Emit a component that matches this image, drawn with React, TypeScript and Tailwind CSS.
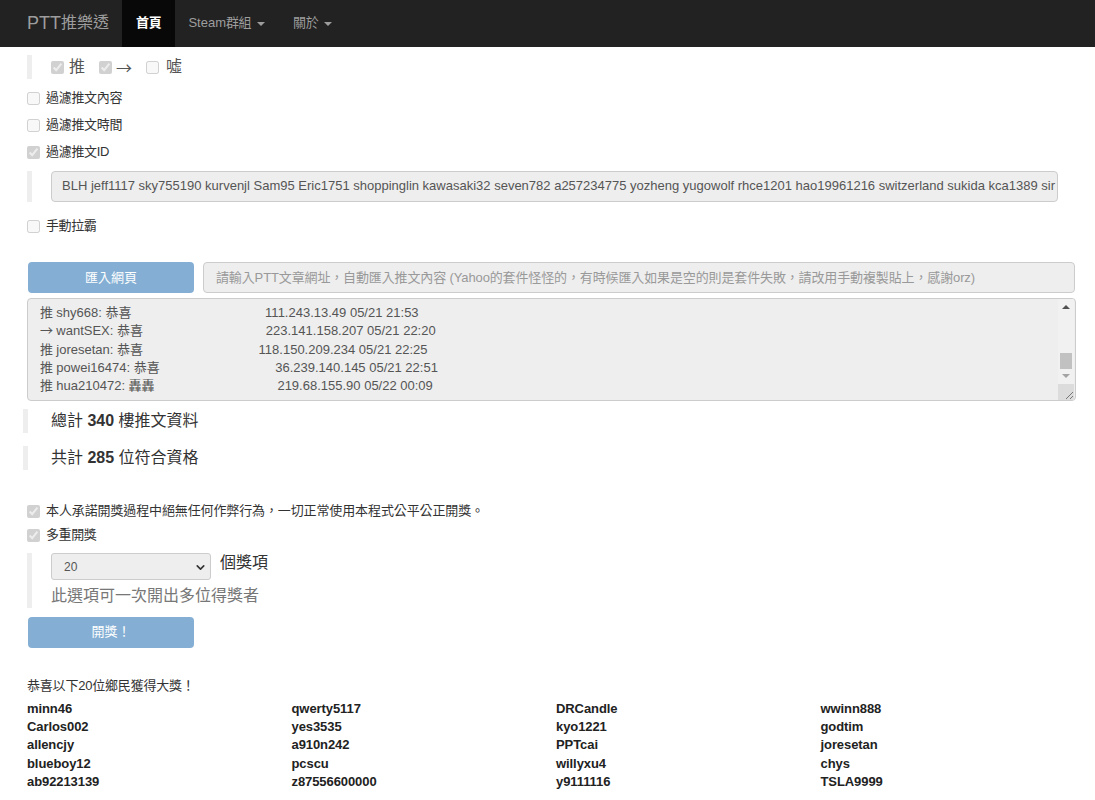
import { ChevronDown } from "lucide-react";

const font = "font-['Liberation_Sans','Noto_Sans_CJK_TC',sans-serif]";

const pushLines = [
  { tag: "推", rest: " shy668: 恭喜                                     111.243.13.49 05/21 21:53" },
  { tag: "→", rest: " wantSEX: 恭喜                                  223.141.158.207 05/21 22:20" },
  { tag: "推", rest: " joresetan: 恭喜                                118.150.209.234 05/21 22:25" },
  { tag: "推", rest: " powei16474: 恭喜                                36.239.140.145 05/21 22:51" },
  { tag: "推", rest: " hua210472: 轟轟                                  219.68.155.90 05/22 00:09" },
];

const winners = [
  "minn46", "qwerty5117", "DRCandle", "wwinn888",
  "Carlos002", "yes3535", "kyo1221", "godtim",
  "allencjy", "a910n242", "PPTcai", "joresetan",
  "blueboy12", "pcscu", "willyxu4", "chys",
  "ab92213139", "z87556600000", "y9111116", "TSLA9999",
];

function Check({ label, checked = false, className = "" }: { label: string; checked?: boolean; className?: string }) {
  return (
    <label className={`flex items-center h-[19px] ${className}`}>
      <input type="checkbox" disabled defaultChecked={checked} className="w-[13px] h-[13px] m-0" />
      <span className="ml-[6px]">{label}</span>
    </label>
  );
}

function Caret() {
  return <span className="inline-block ml-[6px] align-middle w-0 h-0 border-x-4 border-x-transparent border-t-4 border-t-[#9d9d9d]" />;
}

export default function App() {
  return (
    <div className={`${font} text-[13px] leading-[18.57px] text-[#333] bg-white h-[800px] overflow-hidden`}>
      {/* Navbar */}
      <nav className="h-[47px] bg-[#222] flex items-stretch">
        <a className="text-[18px] text-[#9d9d9d] pl-[27px] pr-[13px] flex items-center">
          PTT<span className="text-[16px]">推樂透</span>
        </a>
        <a className="bg-[#080808] text-white font-bold px-[14px] flex items-center tracking-[-0.3px]">首頁</a>
        <a className="text-[#9d9d9d] pl-[13px] pr-[14px] flex items-center">
          Steam<span className="tracking-[-0.5px]">群組</span>
          <Caret />
        </a>
        <a className="text-[#9d9d9d] px-[14px] flex items-center">
          <span className="tracking-[-0.3px]">關於</span>
          <Caret />
        </a>
      </nav>

      <div className="pl-[27px] pr-[19px]">
        <div className="mt-2 h-[24px] border-l-[5px] border-[#eee] pl-[19px] flex items-center text-[16px] text-[#555]">
          <input type="checkbox" disabled defaultChecked className="w-[13px] h-[13px] m-0" />
          <span className="ml-[5px]">推</span>
          <input type="checkbox" disabled defaultChecked className="w-[13px] h-[13px] m-0 ml-[14px]" />
          <span className="ml-[4px] font-['Noto_Sans_CJK_TC',sans-serif]">→</span>
          <input type="checkbox" disabled className="w-[13px] h-[13px] m-0 ml-[14px]" />
          <span className="ml-[7px]">噓</span>
        </div>

        <Check label="過濾推文內容" className="mt-[10px] tracking-[-0.3px]" />
        <Check label="過濾推文時間" className="mt-2 tracking-[-0.3px]" />
        <Check label="過濾推文ID" checked className="mt-2 tracking-[-0.3px]" />

        <div className="mt-[9px] border-l-[5px] border-[#eee] pl-[19px]">
          <div className="w-[1007px] h-[31px] px-[10px] flex items-center bg-[#eee] border border-[#ccc] rounded overflow-hidden whitespace-nowrap text-[#555]">
            BLH jeff1117 sky755190 kurvenjl Sam95 Eric1751 shoppinglin kawasaki32 seven782 a257234775 yozheng yugowolf rhce1201 hao19961216 switzerland sukida kca1389 sir
          </div>
        </div>

        <Check label="手動拉霸" className="mt-[15px] tracking-[-0.4px]" />

        <div className="mt-[26px] flex gap-[9px]">
          <button className="ml-px w-[166px] h-[31px] pt-px bg-[#337ab7] opacity-60 rounded text-white">匯入網頁</button>
          <div className="flex-1 h-[31px] px-3 pt-px flex items-center bg-[#eee] border border-[#ccc] rounded text-[#999] mr-px whitespace-nowrap overflow-hidden tracking-[-0.13px]">
            請輸入PTT文章網址，自動匯入推文內容 (Yahoo的套件怪怪的，有時候匯入如果是空的則是套件失敗，請改用手動複製貼上，感謝orz)
          </div>
        </div>

        {/* Push list with its scrollbar */}
        <div className="mt-[5px] h-[103px] bg-[#eee] border border-[#ccc] rounded flex overflow-hidden text-[#555]">
          <div className="flex-1 pl-3 pt-[4px] whitespace-pre">
            {pushLines.map((line) => (
              <div key={line.rest} className="h-[18.3px] leading-[18.3px]">
                <span className="font-['Noto_Sans_CJK_TC',sans-serif] tracking-[-0.3px]">{line.tag}</span>
                {line.rest}
              </div>
            ))}
          </div>
          <div className="w-[16px] mr-px bg-[#f1f1f1] flex flex-col items-center relative">
            <span className="mt-[6px] w-0 h-0 border-x-[4px] border-x-transparent border-b-[4px] border-b-[#505050]" />
            <span className="mt-[44px] w-[12px] h-[16px] bg-[#c1c1c1]" />
            <span className="mt-[5px] w-0 h-0 border-x-[4px] border-x-transparent border-t-[4px] border-t-[#a3a3a3]" />
            <span className="absolute bottom-0 right-0 w-[16px] h-[16px] bg-[#dcdcdc]">
              <svg viewBox="0 0 16 16" className="w-4 h-4" stroke="#777" strokeWidth="1" fill="none">
                <path d="M15 8L8 15M15 12L12 15" />
              </svg>
            </span>
          </div>
        </div>

        <div className="mt-2 -ml-[4px] h-[24px] border-l-[5px] border-[#eee] pl-[23px] flex items-center text-[16px]">
          <span>總計 <b>340</b> 樓推文資料</span>
        </div>
        <div className="mt-[13px] -ml-[4px] h-[24px] border-l-[5px] border-[#eee] pl-[23px] flex items-center text-[16px]">
          <span>共計 <b>285</b> 位符合資格</span>
        </div>

        <Check label="本人承諾開獎過程中絕無任何作弊行為，一切正常使用本程式公平公正開獎。" checked className="mt-[32px] tracking-[-0.12px]" />
        <Check label="多重開獎" checked className="mt-[5px] tracking-[-0.4px]" />

        <div className="mt-[8px] h-[55px] border-l-[5px] border-[#eee] pl-[19px] text-[16px]">
          <div className="flex items-start h-[27px]">
            <div className="w-[160px] h-[27px] pl-[12px] pr-[3px] pt-px flex items-center justify-between bg-[#eee] border border-[#ccc] rounded-[3px] text-[12px] text-[#555]">
              20
              <ChevronDown size={13} strokeWidth={3} className="text-[#333]" />
            </div>
            <span className="ml-[9px] leading-[20px]">個獎項</span>
          </div>
          <div className="mt-[4px] leading-[23px] text-[#777]">此選項可一次開出多位得獎者</div>
        </div>

        <button className="block mt-[9px] ml-px w-[166px] h-[31px] bg-[#337ab7] opacity-60 rounded text-white">開獎！</button>

        <p className="mt-[29px] tracking-[-0.2px]">恭喜以下20位鄉民獲得大獎！</p>
        <div className="mt-[4px] grid grid-cols-4 w-[1058px] leading-[18.4px] font-bold text-[#222] tracking-[-0.08px]">
          {winners.map((name) => (
            <div key={name}>{name}</div>
          ))}
        </div>
      </div>
    </div>
  );
}
